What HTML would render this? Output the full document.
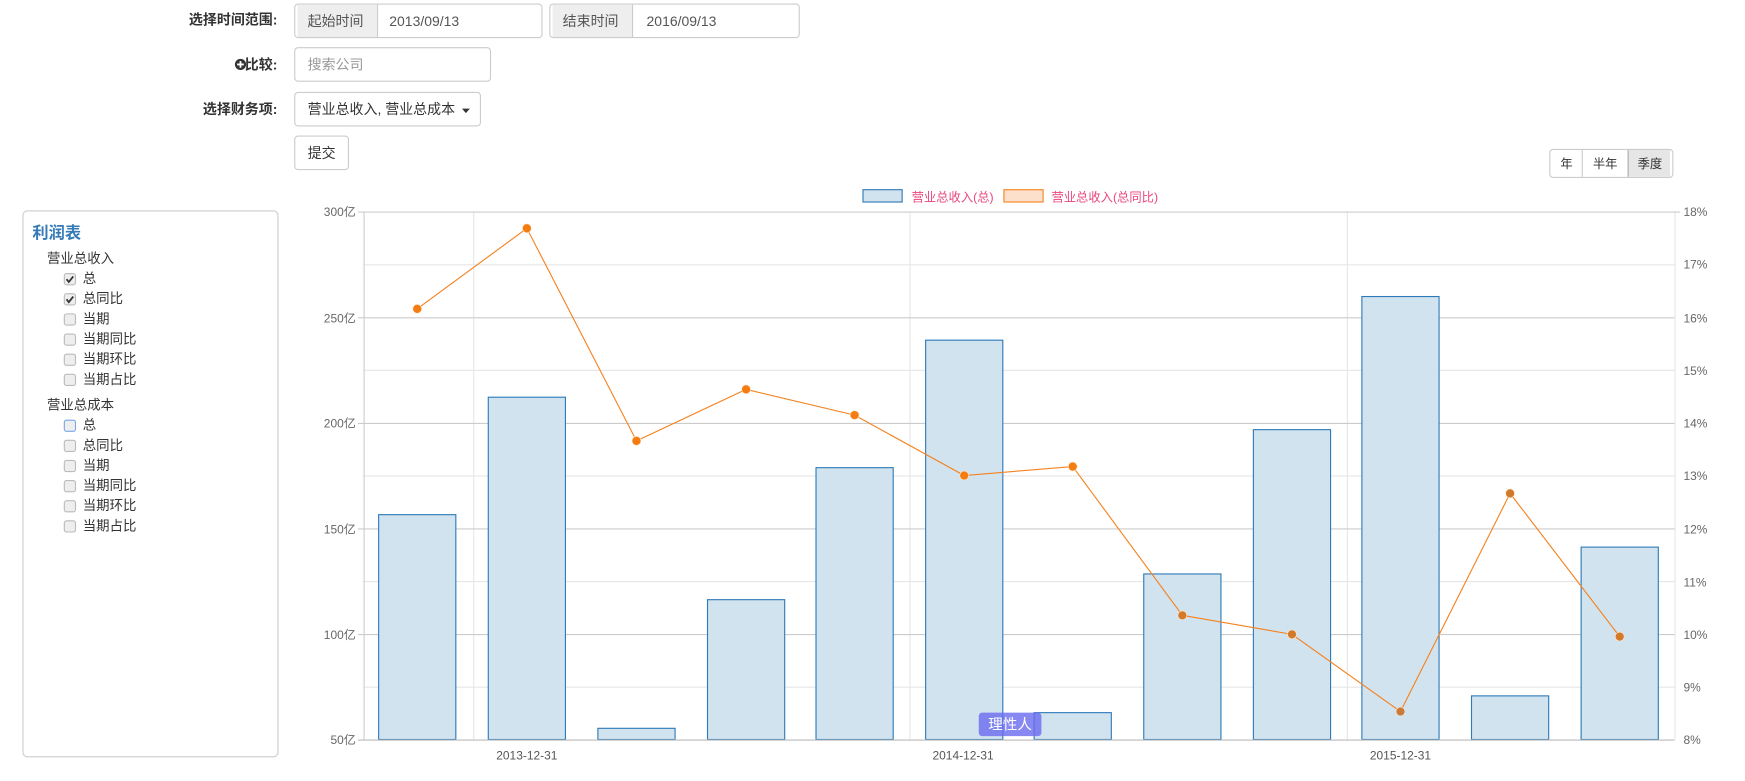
<!DOCTYPE html>
<html><head><meta charset="utf-8"><style>
html,body{margin:0;padding:0;background:#fff;width:1745px;height:781px;overflow:hidden}
svg{display:block}
text{font-family:"Liberation Sans","Noto Sans CJK SC",sans-serif}
</style></head><body>
<svg width="1745" height="781" viewBox="0 0 1560 698" xmlns="http://www.w3.org/2000/svg">
<!-- form -->
<g font-size="12.5" fill="#333">
<text x="248" y="22" text-anchor="end" font-weight="bold">选择时间范围:</text>
<text x="248" y="62" text-anchor="end" font-weight="bold">比较:</text>
<circle cx="215" cy="57.5" r="5" fill="#333"/><path d="M212 57.5h6M215 54.5v6" stroke="#fff" stroke-width="1.6"/>
<text x="248" y="102" text-anchor="end" font-weight="bold">选择财务项:</text>
</g>
<g stroke="#ccc" stroke-width="1">
<rect x="263.5" y="3.5" width="221" height="30" rx="3" fill="#fff"/>
<path d="M266 4h71v29h-71z" fill="#eee" stroke="none"/>
<line x1="337.5" y1="4" x2="337.5" y2="33"/>
<rect x="491.5" y="3.5" width="223" height="30" rx="3" fill="#fff"/>
<path d="M494 4h71v29h-71z" fill="#eee" stroke="none"/>
<line x1="565.5" y1="4" x2="565.5" y2="33"/>
<rect x="263.5" y="42.5" width="175" height="30" rx="3" fill="#fff"/>
<rect x="263.5" y="82.5" width="166" height="30" rx="3" fill="#fff"/>
<rect x="263.5" y="121.5" width="48" height="30" rx="3" fill="#fff"/>
<rect x="1385.5" y="133.5" width="110" height="25" rx="3" fill="#fff"/>
<path d="M1455 134h38v24h-38z" fill="#e6e6e6" stroke="none"/>
<line x1="1414.5" y1="134" x2="1414.5" y2="158"/>
<line x1="1455.5" y1="134" x2="1455.5" y2="158" stroke="#adadad"/>
</g>
<g font-size="12.5" fill="#555">
<text x="275" y="23">起始时间</text><text x="348" y="23">2013/09/13</text>
<text x="503" y="23">结束时间</text><text x="578" y="23">2016/09/13</text>
<text x="275" y="62" fill="#999">搜索公司</text>
<text x="275" y="102" fill="#333">营业总收入, 营业总成本</text>
<path d="M413 97h7l-3.5 4z" fill="#333"/>
<text x="275" y="141" fill="#333">提交</text>
</g>
<g font-size="11" fill="#333">
<text x="1395" y="150">年</text><text x="1424" y="150">半年</text><text x="1464" y="150">季度</text>
</g>
<!-- legend -->
<rect x="771.5" y="169.5" width="35" height="11" fill="#d1e3ef" stroke="#2e7ab8"/>
<text x="815" y="180" font-size="11" fill="#e8467c">营业总收入(总)</text>
<rect x="897.5" y="169.5" width="35" height="11" fill="#fde0cc" stroke="#f5821f"/>
<text x="940" y="180" font-size="11" fill="#e8467c">营业总收入(总同比)</text>
<!-- left panel -->
<rect x="20.5" y="188.5" width="228" height="488" rx="4" fill="#fff" stroke="#ccc"/>
<text x="29" y="213" font-size="14.5" font-weight="bold" fill="#337ab7">利润表</text>
<g font-size="12" fill="#333">
<text x="42" y="235">营业总收入</text>
<text x="42" y="366">营业总成本</text>
</g>
<g font-size="12" fill="#333">
<text x="74" y="253">总</text><text x="74" y="271">总同比</text><text x="74" y="289">当期</text><text x="74" y="307">当期同比</text><text x="74" y="325">当期环比</text><text x="74" y="343">当期占比</text>
<text x="74" y="384">总</text><text x="74" y="402">总同比</text><text x="74" y="420">当期</text><text x="74" y="438">当期同比</text><text x="74" y="456">当期环比</text><text x="74" y="474">当期占比</text>
</g>
<g fill="#eee" stroke="#bbb">
<rect x="57.5" y="244.5" width="10" height="10" rx="2"/><rect x="57.5" y="262.5" width="10" height="10" rx="2"/><rect x="57.5" y="280.5" width="10" height="10" rx="2"/><rect x="57.5" y="298.5" width="10" height="10" rx="2"/><rect x="57.5" y="316.5" width="10" height="10" rx="2"/><rect x="57.5" y="334.5" width="10" height="10" rx="2"/>
<rect x="57.5" y="375.5" width="10" height="10" rx="2" stroke="#7aa7e6"/><rect x="57.5" y="393.5" width="10" height="10" rx="2"/><rect x="57.5" y="411.5" width="10" height="10" rx="2"/><rect x="57.5" y="429.5" width="10" height="10" rx="2"/><rect x="57.5" y="447.5" width="10" height="10" rx="2"/><rect x="57.5" y="465.5" width="10" height="10" rx="2"/>
</g>
<path d="M59.5 249.5l2 2.5 4-5M59.5 267.5l2 2.5 4-5" stroke="#333" stroke-width="1.6" fill="none"/>
<!-- grid -->
<g stroke="#e6e6e6">
<line x1="325" y1="236.6" x2="1497" y2="236.6"/><line x1="325" y1="331" x2="1497" y2="331"/><line x1="325" y1="425.4" x2="1497" y2="425.4"/><line x1="325" y1="519.8" x2="1497" y2="519.8"/><line x1="325" y1="614.2" x2="1497" y2="614.2"/>
<line x1="423.5" y1="189" x2="423.5" y2="661"/><line x1="813.5" y1="189" x2="813.5" y2="661"/><line x1="1204.5" y1="189" x2="1204.5" y2="661"/><line x1="1497.5" y1="189" x2="1497.5" y2="661"/>
</g>
<g stroke="#ccc">
<line x1="320" y1="189.5" x2="1502" y2="189.5"/><line x1="320" y1="284" x2="1497" y2="284"/><line x1="320" y1="378.4" x2="1497" y2="378.4"/><line x1="320" y1="472.8" x2="1497" y2="472.8"/><line x1="320" y1="567.2" x2="1497" y2="567.2"/>
<line x1="325.5" y1="189" x2="325.5" y2="661"/>
</g>
<g font-size="10.7" fill="#666" text-anchor="end">
<text x="318" y="193">300亿</text><text x="318" y="288">250亿</text><text x="318" y="382">200亿</text><text x="318" y="477">150亿</text><text x="318" y="571">100亿</text><text x="318" y="665">50亿</text>
</g>
<g font-size="10.7" fill="#666">
<text x="1505" y="193">18%</text><text x="1505" y="240">17%</text><text x="1505" y="288">16%</text><text x="1505" y="335">15%</text><text x="1505" y="382">14%</text><text x="1505" y="429">13%</text><text x="1505" y="477">12%</text><text x="1505" y="524">11%</text><text x="1505" y="571">10%</text><text x="1505" y="618">9%</text><text x="1505" y="665">8%</text>
</g>
<!-- bars -->
<g fill="#d1e3ef" stroke="#2e7ab8" stroke-width="1">
<rect x="338.5" y="460" width="69" height="201"/><rect x="436.5" y="355" width="69" height="306"/><rect x="534.5" y="651" width="69" height="10"/><rect x="632.5" y="536" width="69" height="125"/><rect x="729.5" y="418" width="69" height="243"/><rect x="827.5" y="304" width="69" height="357"/><rect x="924.5" y="637" width="69" height="24"/><rect x="1022.5" y="513" width="69" height="148"/><rect x="1120.5" y="384" width="69" height="277"/><rect x="1217.5" y="265" width="69" height="396"/><rect x="1315.5" y="622" width="69" height="39"/><rect x="1413.5" y="489" width="69" height="172"/>
</g>
<line x1="320" y1="661.5" x2="1497" y2="661.5" stroke="#bbb"/>
<g font-size="10.7" fill="#555" text-anchor="middle">
<text x="471" y="679">2013-12-31</text><text x="861" y="679">2014-12-31</text><text x="1252" y="679">2015-12-31</text>
</g>
<!-- line -->
<polyline points="373,276 471,204 569,394 667,348 764,371 862,425 959,417 1057,550 1155,567 1252,636 1350,441 1448,569" fill="none" stroke="#f5821f" stroke-width="1"/>
<g fill="#f57c10" stroke="#fde6d2" stroke-width="0.6">
<circle cx="373" cy="276" r="4"/><circle cx="471" cy="204" r="4"/><circle cx="569" cy="394" r="4"/><circle cx="667" cy="348" r="4"/><circle cx="764" cy="371" r="4"/><circle cx="862" cy="425" r="4"/><circle cx="959" cy="417" r="4"/><circle cx="1057" cy="550" r="4" fill="#d2792a"/><circle cx="1155" cy="567" r="4" fill="#d2792a"/><circle cx="1252" cy="636" r="4" fill="#c97a3a"/><circle cx="1350" cy="441" r="4" fill="#d2792a"/><circle cx="1448" cy="569" r="4" fill="#d2792a"/>
</g>
<!-- watermark -->
<rect x="875" y="637" width="56" height="21" rx="3" fill="#6a6af0" opacity="0.8"/>
<text x="903" y="652" font-size="13" fill="#fff" text-anchor="middle">理性人</text>
</svg>
</body></html>
